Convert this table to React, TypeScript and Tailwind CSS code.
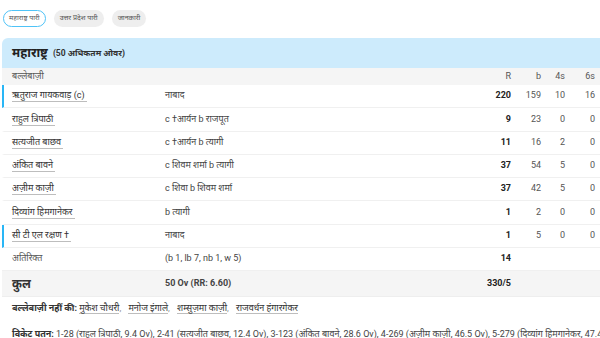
import React from "react";

type Bat = { name: string; dis: string; r: string; b: string; f: string; s: string; notOut?: boolean };

const bats: Bat[] = [
  { name: "ऋतुराज गायकवाड़ (c)", dis: "नाबाद", r: "220", b: "159", f: "10", s: "16", notOut: true },
  { name: "राहुल त्रिपाठी", dis: "c †आर्यन b राजपूत", r: "9", b: "23", f: "0", s: "0" },
  { name: "सत्यजीत बाछव", dis: "c †आर्यन b त्यागी", r: "11", b: "16", f: "2", s: "0" },
  { name: "अंकित बावने", dis: "c शिवम शर्मा b त्यागी", r: "37", b: "54", f: "5", s: "0" },
  { name: "अज़ीम काज़ी", dis: "c शिवा b शिवम शर्मा", r: "37", b: "42", f: "5", s: "0" },
  { name: "दिव्यांग हिमगानेकर", dis: "b त्यागी", r: "1", b: "2", f: "0", s: "0" },
  { name: "सी टी एल रक्षण †", dis: "नाबाद", r: "1", b: "5", f: "0", s: "0", notOut: true },
];

const dnb = ["मुकेश चौधरी", "मनोज इंगाले", "शम्सुज़मा काज़ी", "राजवर्धन हंगारगेकर"];

export default function App() {
  return (
    <div
      className="w-[600px] h-[338px] overflow-hidden bg-white text-[#333]"
      style={{ fontFamily: "Roboto, 'Noto Sans', 'Open Sans', sans-serif" }}
    >
      <div className="flex gap-[8px] pl-[3px] pt-[10px] h-[38px] items-start">
        <div className="h-[17px] px-[5px] rounded-full border border-[#4fc3f7] bg-white text-[7px] text-[#555] flex items-center">
          महाराष्ट्र पारी
        </div>
        <div className="h-[17px] px-[6px] rounded-full bg-[#eeeeee] text-[7px] text-[#555] flex items-center">
          उत्तर प्रदेश पारी
        </div>
        <div className="h-[17px] px-[6px] rounded-full bg-[#eeeeee] text-[7px] text-[#555] flex items-center">
          जानकारी
        </div>
      </div>
      <div className="ml-[2px] w-[598px] rounded-tl-[6px] overflow-hidden bg-white">
        <div className="h-[30px] bg-[#cdebfc] flex items-center pl-[10px] gap-[5px]">
          <span className="text-[12.5px] font-bold text-[#222]">महाराष्ट्र</span>
          <span className="text-[8.5px] font-bold text-[#333]">(50 अधिकतम ओवर)</span>
        </div>
        <div className="h-[17px] bg-[#f5f5f5] flex items-center text-[9px] text-[#555]">
          <div className="w-[163px] pl-[10px]">बल्लेबाज़ी</div>
          <div className="flex-1"></div>
          <div className="w-[30px] text-right">R</div>
          <div className="w-[30px] text-right">b</div>
          <div className="w-[24px] text-right">4s</div>
          <div className="w-[30px] text-right mr-[5px]">6s</div>
        </div>
        {bats.map((p) => (
          <div
            key={p.name}
            className={`h-[23.25px] flex items-center border-b border-[#f0f0f0] text-[9px] border-l-2 ${
              p.notOut ? "border-l-[#29b6f6]" : "border-l-transparent"
            }`}
          >
            <div className="w-[161px] pl-[8px]">
              <span className="text-[#333] border-b border-[#bdbdbd] pb-[1px] pr-[2px]">{p.name}</span>
            </div>
            <div className="flex-1 text-[#444]">{p.dis}</div>
            <div className="w-[30px] text-right font-bold text-[#222]">{p.r}</div>
            <div className="w-[30px] text-right text-[#555]">{p.b}</div>
            <div className="w-[24px] text-right text-[#555]">{p.f}</div>
            <div className="w-[30px] text-right text-[#555] mr-[5px]">{p.s}</div>
          </div>
        ))}
        <div className="h-[23.25px] flex items-center border-b border-[#f0f0f0] text-[9px]">
          <div className="w-[163px] pl-[10px] text-[#555]">अतिरिक्त</div>
          <div className="flex-1 text-[#444]">(b 1, lb 7, nb 1, w 5)</div>
          <div className="w-[30px] text-right font-bold text-[#222] mr-[89px]">14</div>
        </div>
        <div className="h-[26px] flex items-center bg-[#f5f5f5] border-b border-[#eeeeee]">
          <div className="w-[163px] pl-[10px] text-[12px] font-bold text-[#333]">कुल</div>
          <div className="flex-1 text-[9px] font-bold text-[#444]">50 Ov (RR: 6.60)</div>
          <div className="w-[40px] text-right text-[9px] font-bold text-[#222] mr-[89px]">330/5</div>
        </div>
        <div className="pl-[10px] pt-[5px] text-[9px] text-[#333] whitespace-nowrap">
          <span className="font-bold">बल्लेबाज़ी नहीं की: </span>
          {dnb.map((n, i) => (
            <span key={n}>
              <span className="border-b border-[#bdbdbd]">{n}</span>
              {i < dnb.length - 1 ? <span className="text-[#999] mr-[5px]">, </span> : null}
            </span>
          ))}
        </div>
        <div className="pl-[10px] pt-[12px] text-[9px] text-[#444] whitespace-nowrap">
          <span className="font-bold text-[#333]">विकेट पतन: </span>
          1-28 (राहुल त्रिपाठी, 9.4 Ov), 2-41 (सत्यजीत बाछव, 12.4 Ov), 3-123 (अंकित बावने, 28.6 Ov), 4-269 (अज़ीम काज़ी, 46.5 Ov), 5-279 (दिव्यांग हिमगानेकर, 47.4 Ov)
        </div>
      </div>
    </div>
  );
}
